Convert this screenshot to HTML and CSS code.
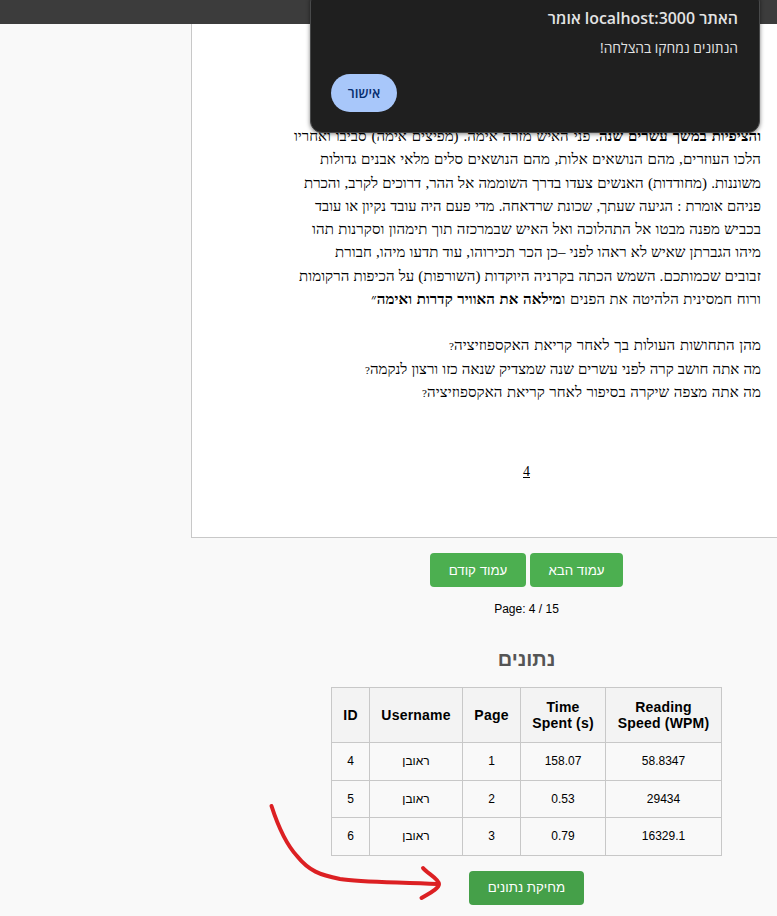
FILE: index.html
```
<!DOCTYPE html>
<html lang="he">
<head>
<meta charset="utf-8">
<title>נתונים</title>
<link rel="stylesheet" href="styles.css">
</head>
<body>
<div class="browser-bar"></div>
<main class="reader">
  <section class="sheet" dir="rtl">
    <div class="lines">
      <p class="w467"><b>והציפיות במשך עשרים שנה</b>. פני האיש מזרה אימה. (מפיצים אימה) סביבו ואחריו</p>
      <p class="w441">הלכו העוזרים, מהם הנושאים אלות, מהם הנושאים סלים מלאי אבנים גדולות</p>
      <p class="w457">משוננות. (מחודדות) האנשים צעדו בדרך השוממה אל ההר, דרוכים לקרב, והכרת</p>
      <p class="w446">פניהם אומרת : הגיעה שעתך, שכונת שרדאחה. מדי פעם היה עובד נקיון או עובד</p>
      <p class="w449">בכביש מפנה מבטו אל התהלוכה ואל האיש שבמרכזה תוך תימהון וסקרנות תהו</p>
      <p class="w426">מיהו הגברתן שאיש לא ראהו לפני –כן הכר תכירוהו, עוד תדעו מיהו, חבורת</p>
      <p class="w462">זבובים שכמותכם. השמש הכתה בקרניה היוקדות (השורפות) על הכיפות הרקומות</p>
      <p class="w390">ורוח חמסינית הלהיטה את הפנים ו<b>מילאה את האוויר קדרות ואימה</b>״</p>
    </div>
    <div class="lines questions">
      <p class="w312">מהן התחושות העולות בך לאחר קריאת האקספוזיציה<span class="mark">?</span></p>
      <p class="w396">מה אתה חושב קרה לפני עשרים שנה שמצדיק שנאה כזו ורצון לנקמה<span class="mark">?</span></p>
      <p class="w339">מה אתה מצפה שיקרה בסיפור לאחר קריאת האקספוזיציה<span class="mark">?</span></p>
    </div>
    <footer class="folio">4</footer>
  </section>
  <div class="controls">
    <nav class="pager" dir="rtl">
      <button class="btn next">עמוד הבא</button>
      <button class="btn prev">עמוד קודם</button>
    </nav>
    <p class="counter">Page: 4 / 15</p>
    <h2>נתונים</h2>
    <table>
      <colgroup><col class="c-id"><col class="c-user"><col class="c-page"><col class="c-time"><col class="c-speed"></colgroup>
      <thead><tr><th>ID</th><th>Username</th><th>Page</th><th>Time<br>Spent (s)</th><th>Reading<br>Speed (WPM)</th></tr></thead>
      <tbody>
        <tr><td>4</td><td>ראובן</td><td>1</td><td>158.07</td><td>58.8347</td></tr>
        <tr><td>5</td><td>ראובן</td><td>2</td><td>0.53</td><td>29434</td></tr>
        <tr><td>6</td><td>ראובן</td><td>3</td><td>0.79</td><td>16329.1</td></tr>
      </tbody>
    </table>
    <button class="btn delete">מחיקת נתונים</button>
  </div>
</main>
<svg class="arrow" width="190" height="116" viewBox="0 0 190 116" aria-hidden="true">
  <path d="M11.500 6C17 23 25 43 37 56C49 71 60 75 80 79C101 82.500 140 82 177 84"/>
  <path d="M163 68C167 73 179 79 179 84C179 89 168 94 161.500 98"/>
</svg>
<div class="dialog" role="alertdialog" dir="rtl">
  <h1>האתר <bdi>localhost:3000</bdi> אומר</h1>
  <p>הנתונים נמחקו בהצלחה!</p>
  <button>אישור</button>
</div>
</body>
</html>
```
FILE: styles.css
```
* { box-sizing: border-box; }
html { overflow: hidden; }
body {
  margin: 0;
  width: 777px;
  height: 916px;
  overflow: hidden;
  position: relative;
  background: #f9f9f9;
  color: #000;
  font-family: "Liberation Sans", sans-serif;
}
p, h1, h2 { margin: 0; }
.browser-bar { height: 24px; background: #3c3c3c; }
.reader { margin-left: 191px; }
.sheet {
  height: 514px;
  padding: 101px 16px 0 0;
  background: #fff;
  border: 1px solid #c8c8c8;
  border-width: 0 0 1px 1px;
  font-family: "Liberation Serif", serif;
  font-size: 15px;
}
.lines p {
  height: 23.3px;
  line-height: 23.3px;
  white-space: nowrap;
  text-align: justify;
  text-align-last: justify;
  letter-spacing: 0.1px;
}
.questions { margin-top: 23px; }
.mark { font-size: 11px; line-height: 1; }
.lines .w467 { width: 467px; letter-spacing: 0; }
.w441 { width: 441px; }
.lines .w457 { width: 457px; letter-spacing: 0; }
.lines .w446 { width: 446px; font-size: 14.7px; letter-spacing: 0; }
.w449 { width: 449px; }
.w426 { width: 426px; }
.w462 { width: 462px; }
.w390 { width: 390px; }
.w312 { width: 312px; }
.lines .w396 { width: 396px; letter-spacing: 0; }
.w339 { width: 339px; }
.folio {
  width: 469px;
  margin-top: 59px;
  font-size: 14px;
  font-weight: 500;
  line-height: 17px;
  text-align: center;
  text-decoration: underline;
}
.controls {
  margin-left: 85px;
  display: flex;
  flex-direction: column;
  align-items: center;
}
.pager { display: flex; gap: 4px; margin-top: 15px; }
.btn {
  height: 34px;
  padding: 0;
  border: 0;
  border-radius: 4px;
  background: #4caf50;
  color: #fff;
  font: 13.3px "Liberation Sans", sans-serif;
}
.next { width: 93px; }
.prev { width: 96px; }
.delete { width: 115px; margin-top: 15px; background: #45a049; }
.counter { margin-top: 14px; font-size: 12px; line-height: 16px; }
h2 { margin-top: 28px; font-size: 20px; line-height: 28px; color: #555; }
table {
  width: 391px;
  margin-top: 14px;
  border-collapse: collapse;
  table-layout: fixed;
  font-size: 12px;
}
th, td { padding: 0; border: 1px solid #c8c8c8; text-align: center; vertical-align: middle; }
th { height: 55px; background: #f3f3f3; font-size: 14px; line-height: 16px; letter-spacing: 0.2px; }
td { height: 37.6px; }
.c-id { width: 38px; }
.c-user { width: 93px; }
.c-page { width: 58px; }
.c-time { width: 85px; }
.c-speed { width: 116px; }
.arrow { position: absolute; left: 260px; top: 800px; }
.arrow path {
  fill: none;
  stroke: #dc2023;
  stroke-width: 4;
  stroke-linecap: round;
  stroke-linejoin: round;
}
.dialog {
  position: absolute;
  top: -10px;
  left: 310px;
  width: 450px;
  height: 143px;
  padding: 17px 21px 0 20px;
  border: 1px solid #48494a;
  border-radius: 12px;
  background: #1f1f1f;
  color: #e3e3e3;
  box-shadow: 0 1px 4px rgba(0, 0, 0, 0.5);
  font-family: "Open Sans", sans-serif;
}
.dialog h1 { font-size: 15.9px; font-weight: 600; line-height: 20px; }
.dialog p { margin-top: 11px; font-size: 13.8px; line-height: 18px; }
.dialog button {
  display: block;
  width: 66px;
  height: 38px;
  margin: 17px auto 0 0;
  padding: 0;
  border: 0;
  border-radius: 19px;
  background: #a8c7fa;
  color: #062e6f;
  font: 600 13.4px "Open Sans", sans-serif;
}
```
